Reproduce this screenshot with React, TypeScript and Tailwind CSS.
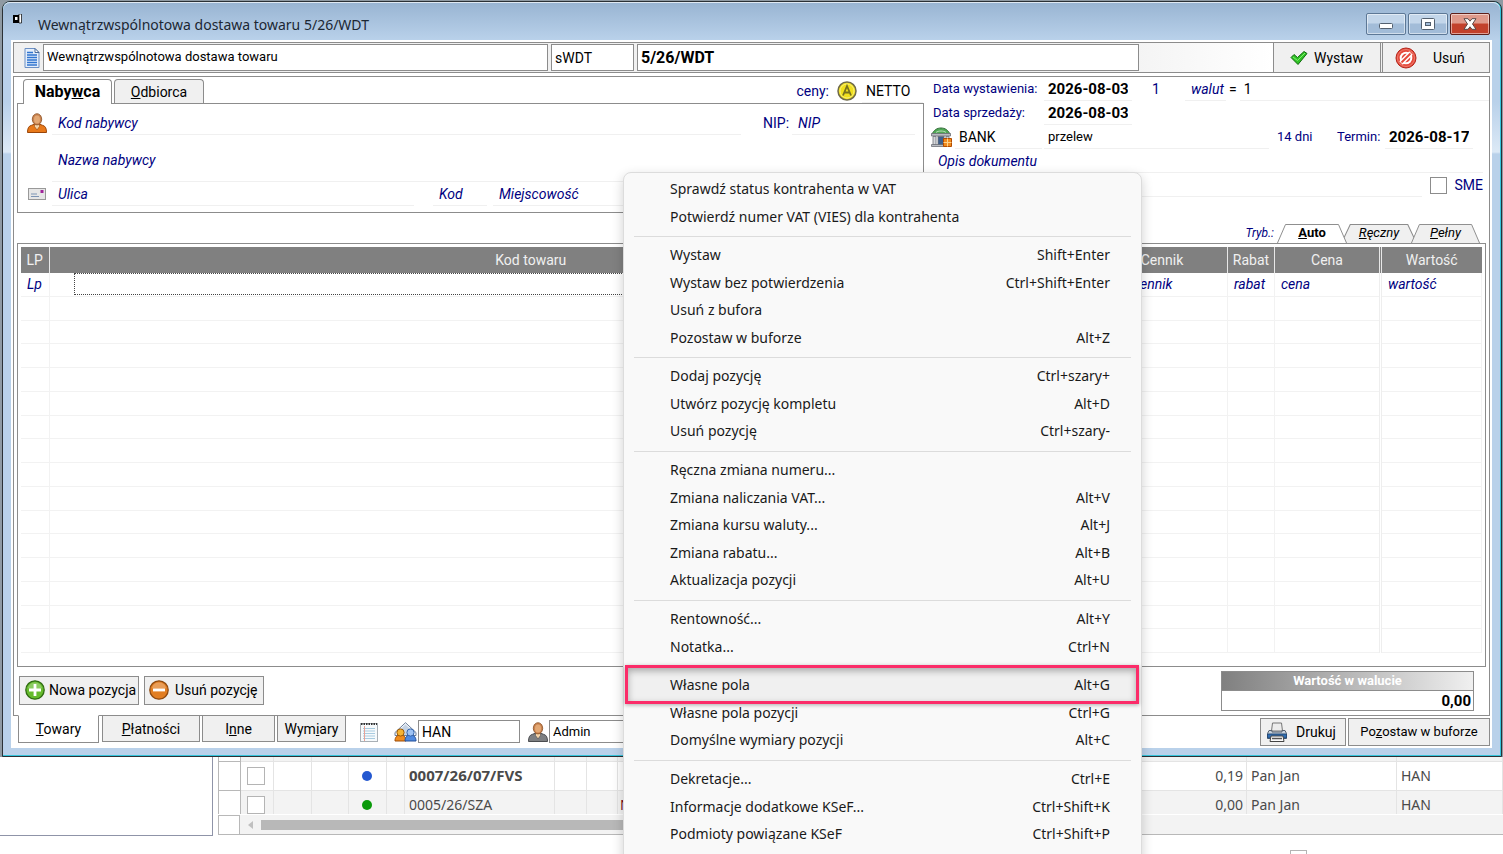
import React from "react"
import { clsx } from "clsx"

type MenuEntry = { label: string; keys?: string; marked?: boolean }

const menuGroups: MenuEntry[][] = [
  [
    { label: "Sprawdź status kontrahenta w VAT" },
    { label: "Potwierdź numer VAT (VIES) dla kontrahenta" },
  ],
  [
    { label: "Wystaw", keys: "Shift+Enter" },
    { label: "Wystaw bez potwierdzenia", keys: "Ctrl+Shift+Enter" },
    { label: "Usuń z bufora" },
    { label: "Pozostaw w buforze", keys: "Alt+Z" },
  ],
  [
    { label: "Dodaj pozycję", keys: "Ctrl+szary+" },
    { label: "Utwórz pozycję kompletu", keys: "Alt+D" },
    { label: "Usuń pozycję", keys: "Ctrl+szary-" },
  ],
  [
    { label: "Ręczna zmiana numeru..." },
    { label: "Zmiana naliczania VAT...", keys: "Alt+V" },
    { label: "Zmiana kursu waluty...", keys: "Alt+J" },
    { label: "Zmiana rabatu...", keys: "Alt+B" },
    { label: "Aktualizacja pozycji", keys: "Alt+U" },
  ],
  [
    { label: "Rentowność...", keys: "Alt+Y" },
    { label: "Notatka...", keys: "Ctrl+N" },
  ],
  [
    { label: "Własne pola", keys: "Alt+G", marked: true },
    { label: "Własne pola pozycji", keys: "Ctrl+G" },
    { label: "Domyślne wymiary pozycji", keys: "Alt+C" },
  ],
  [
    { label: "Dekretacje...", keys: "Ctrl+E" },
    { label: "Informacje dodatkowe KSeF...", keys: "Ctrl+Shift+K" },
    { label: "Podmioty powiązane KSeF", keys: "Ctrl+Shift+P" },
  ],
]

/* ---------- icons ---------- */

const DocumentIcon = () => (
  <svg width="16" height="20" viewBox="0 0 16 20">
    <path d="M1 .5h10l4 4v15H1z" fill="#e4eefb" stroke="#6b8fc4" />
    <path d="M11 .5v4h4z" fill="#fff" stroke="#4a6a9a" />
    <path d="M3 4.500h6M3 7h10M3 9.500h10M3 12h10M3 14.500h10M3 17h10" stroke="#2f74d0" strokeWidth="1.400" />
  </svg>
)

const CheckIcon = () => (
  <svg width="18" height="16" viewBox="0 0 18 16">
    <path d="M1 7.500 4 4.500l3.500 3L14 1.500l3 2L8 14.500z" fill="#2fc226" stroke="#12690f" strokeLinejoin="round" />
    <path d="M3 7l4.500 3.500L15 3" fill="none" stroke="#7ff06c" />
  </svg>
)

const ForbidIcon = () => (
  <svg width="22" height="22" viewBox="0 0 22 22">
    <circle cx="11" cy="11" r="10" fill="#e5483a" stroke="#b3261b" />
    <circle cx="11" cy="11" r="8.500" fill="none" stroke="#f08a7c" strokeWidth=".8" />
    <circle cx="11" cy="11" r="6.300" fill="#fff" />
    <circle cx="11" cy="11" r="4.300" fill="#e5483a" />
    <path d="M6 16 16 6" stroke="#fff" strokeWidth="5" />
    <path d="M6.500 15.500l9-9" stroke="#e5483a" strokeWidth="2" />
  </svg>
)

const PersonIcon = ({ body, edge }: { body: string; edge: string }) => (
  <svg width="20" height="20" viewBox="0 0 20 20">
    <path d="M.5 19.500c0-4 1-6.500 4-7.200L8 11h4l3.500 1.300c3 .7 4 3.200 4 7.200z" fill={body} stroke={edge} />
    <path d="M7.500 11h5v2.500L10 17l-2.500-3.500z" fill="#f3d3a8" stroke={edge} strokeWidth=".6" />
    <ellipse cx="10" cy="6.300" rx="4.700" ry="5.600" fill="#c98350" stroke="#8a4f22" strokeWidth=".8" />
    <ellipse cx="10" cy="6.500" rx="3" ry="4" fill="#e3a874" />
  </svg>
)

const LetterIcon = () => (
  <svg width="18" height="12" viewBox="0 0 18 12">
    <rect x=".5" y=".5" width="17" height="11" fill="#e6e6e6" stroke="#999" />
    <rect x="12.500" y="2" width="3" height="3" fill="#a0259a" />
    <path d="M3 6h6M3 8.500h8" stroke="#7d95b5" />
  </svg>
)

const CoinIcon = () => (
  <svg width="20" height="20" viewBox="0 0 20 20">
    <circle cx="10" cy="10" r="9" fill="#f1e01c" stroke="#6f6a4a" strokeWidth="1.500" />
    <circle cx="10" cy="10" r="7" fill="none" stroke="#f9f07c" />
    <path d="M6 14.500 10 5l4 9.500M7.500 11.500h5" fill="none" stroke="#77711f" strokeWidth="1.800" />
  </svg>
)

const BankIcon = () => (
  <svg width="21" height="20" viewBox="0 0 21 20">
    <path d="M1 7C3 3 6 1 10 1s7 2 9 6z" fill="#4fa855" stroke="#2d6a33" />
    <path d="M5 5.500C7 3.500 13 3.500 15 5.500" stroke="#b8e0b8" fill="none" />
    <path d="M.5 6.500h19v2.500H.5zM.5 17.500h19v2H.5z" fill="#b9bcc2" stroke="#6d7077" strokeWidth=".8" />
    <path d="M2 9.500h3v8H2zM15 9.500h3v8h-3z" fill="#d5d7db" stroke="#6d7077" strokeWidth=".8" />
    <rect x="7" y="9.500" width="6" height="8" fill="#3f5f8c" stroke="#6d7077" strokeWidth=".8" />
    <path d="M12.500 11.500h8v8h-8z" fill="#f08a1d" stroke="#b34c00" />
    <path d="M12.500 15.500h8M16.500 11.500v8" stroke="#ffd28a" />
  </svg>
)

const RoundIcon = ({ plus }: { plus?: boolean }) => (
  <svg width="20" height="20" viewBox="0 0 20 20">
    <circle cx="10" cy="10" r="9.200" fill={plus ? "#66bb2e" : "#e27e22"} stroke={plus ? "#2f6b12" : "#8f4a10"} strokeWidth="1.300" />
    <path d="M3 8a7.200 7.200 0 0 1 14 0C13 10 7 10 3 8z" fill="#fff" opacity=".25" />
    <path d={plus ? "M10 4v12M4 10h12" : "M4 10h12"} stroke="#fff" strokeWidth="2.800" />
  </svg>
)

const NotepadIcon = () => (
  <svg width="18" height="20" viewBox="0 0 18 20">
    <rect x=".5" y="1.500" width="17" height="18" fill="#f6fafc" stroke="#a9b0b6" />
    <path d="M1 2h16" stroke="#333" strokeWidth="2" strokeDasharray="1.500 1" />
    <path d="M3 6.500h12M3 9h12M3 11.500h12M3 14h12M3 16.500h12" stroke="#a8cbe0" />
    <path d="M4.500 4v15" stroke="#e8a296" />
  </svg>
)

const TeamIcon = () => (
  <svg width="23" height="20" viewBox="0 0 23 20">
    <path d="M1 10.500 11.500.7 22 10.500v3H1z" fill="#f4f7fb" stroke="#6c7f9a" />
    <path d="M5.500 8 11.500 2.500 17.500 8v5h-12z" fill="#c3d2e4" />
    <path d="M1 19c0-4 2-6 5.500-6S12 15 12 19z" fill="#f08c1e" stroke="#9c4d08" />
    <circle cx="6.500" cy="10.500" r="3.600" fill="#f6b433" stroke="#9c5a08" />
    <path d="M11 19c0-4 2-6 5.500-6s5.500 2 5.500 6z" fill="#4f8ae0" stroke="#224f97" />
    <circle cx="16.500" cy="10.500" r="3.600" fill="#9fc4f5" stroke="#3565ad" />
  </svg>
)

const PrinterIcon = () => (
  <svg width="20" height="20" viewBox="0 0 20 20">
    <path d="M5.500 1h9l1 8h-11z" fill="#ececec" stroke="#777" />
    <path d="M2 8.500h3V10h10V8.500h3l1.500 3v5h-19v-5z" fill="#c9d3de" stroke="#55606e" />
    <path d="M.5 12h19v4H.5z" fill="#2f6db2" stroke="#274a75" />
    <path d="M4 14h12l1 5.500H3z" fill="#fafafa" stroke="#444" />
    <path d="M5 16.500h10" stroke="#555" strokeWidth="1.500" />
  </svg>
)

/* ---------- small controls ---------- */

type FieldProps = React.InputHTMLAttributes<HTMLInputElement> & { name: string }

// flat field with only a pale line below it
const Field: React.FC<FieldProps> = ({ name, className, ...props }) => (
  <input
    aria-label={name}
    name={name}
    className={clsx(
      "h-6 min-w-0 border-b border-[#f0f0f0] bg-transparent outline-none placeholder:italic placeholder:text-[#000080] placeholder:opacity-100",
      className,
    )}
    {...props}
  />
)

const BoxField: React.FC<FieldProps> = ({ name, className, ...props }) => (
  <input
    aria-label={name}
    name={name}
    className={clsx("min-w-0 border border-[#8c8c8c] bg-white px-[3px] outline-none", className)}
    {...props}
  />
)

const PushButton: React.FC<React.ButtonHTMLAttributes<HTMLButtonElement>> = ({ className, ...props }) => (
  <button
    className={clsx("flex items-center whitespace-nowrap border border-[#8c8c8c] bg-[#f0f0f0]", className)}
    {...props}
  />
)

const ModeTab: React.FC<{ active?: boolean; className?: string; children: React.ReactNode }> = ({
  active,
  className,
  children,
}) => (
  <button className={clsx("relative -ml-[6px] h-[19px] text-[13px]", active ? "z-10 font-bold" : "italic", className)}>
    <svg className="absolute inset-0 h-full w-full" viewBox="0 0 74 19" preserveAspectRatio="none">
      <path d="M.5 19 9 .5h56L73.500 19" fill={active ? "#fff" : "#f0f0f0"} stroke="#8c8c8c" />
    </svg>
    <span className="relative">{children}</span>
  </button>
)

const BottomTab: React.FC<{ active?: boolean; className?: string; children: React.ReactNode }> = ({
  active,
  className,
  children,
}) => (
  <button
    className={clsx(
      "border border-[#8c8c8c]",
      active ? "-mt-px h-7 border-t-white bg-white" : "h-[26px] border-t-0 bg-[#f0f0f0]",
      className,
    )}
  >
    {children}
  </button>
)

/* ---------- window parts ---------- */

const captionButton = "flex h-[22px] w-10 items-center justify-center rounded-[2px] border shadow-[inset_0_0_0_1px_#ffffff80]"

const TitleBar = () => (
  <header className="flex h-[38px] justify-between pl-[2px] pr-[2px]">
    <div className="flex items-start">
      <svg className="mt-3" width="9" height="10" viewBox="0 0 9 10">
        <path d="M0 1h6v8H0z" fill="#000" />
        <path d="M2 3h2.500v3H2z" fill="#fff" />
        <path d="M6 0h2.500v9H6z" fill="#fff" stroke="#000" strokeWidth=".7" />
      </svg>
      <h1 className="ml-4 mt-[11px] font-['Noto_Sans'] text-sm leading-6 text-[#1c2733]">
        Wewnątrzwspólnotowa dostawa towaru 5/26/WDT
      </h1>
    </div>
    <div className="mt-[11px] flex gap-[2px]">
      <button aria-label="Minimalizuj" className={clsx(captionButton, "border-[#5d7896] bg-linear-to-b from-[#c3d6ea] from-45% to-[#a2bcd8] to-50%")}>
        <svg className="mt-1" width="14" height="6" viewBox="0 0 14 6">
          <rect x=".5" y=".5" width="13" height="5" rx="1" fill="#fff" stroke="#53606f" />
        </svg>
      </button>
      <button aria-label="Maksymalizuj" className={clsx(captionButton, "border-[#5d7896] bg-linear-to-b from-[#c3d6ea] from-45% to-[#a2bcd8] to-50%")}>
        <svg width="14" height="12" viewBox="0 0 14 12">
          <rect x=".5" y=".5" width="13" height="11" rx="1" fill="#fff" stroke="#53606f" />
          <rect x="4.500" y="4.500" width="5" height="3" fill="#a2bcd8" stroke="#53606f" />
        </svg>
      </button>
      <button aria-label="Zamknij" className={clsx(captionButton, "border-[#5e1f1a] bg-linear-to-b from-[#df9a8c] from-45% to-[#c2412c] to-50%")}>
        <svg width="14" height="12" viewBox="0 0 14 12">
          <path d="M1 .7h4L7 3.200 9 .7h4L9.500 6l3.500 5.300H9L7 8.800l-2 2.500H1L4.500 6z" fill="#fff" stroke="#5b4a4a" />
        </svg>
      </button>
    </div>
  </header>
)

const DocumentBar = () => (
  <div className="flex h-[31px] border border-[#8c8c8c] bg-[#f0f0f0]">
    <div className="flex w-[29px] items-center justify-end pr-[3px]">
      <DocumentIcon />
    </div>
    <div className="flex flex-1 gap-[3px] bg-linear-to-r from-[#f0f0f0] from-85% to-white py-px">
      <BoxField name="typ" defaultValue="Wewnątrzwspólnotowa dostawa towaru" className="w-[505px] text-[13px]" />
      <BoxField name="seria" defaultValue="sWDT" className="w-[83px]" />
      <BoxField name="numer" defaultValue="5/26/WDT" className="w-[502px] text-base font-bold" />
    </div>
    <PushButton className="-my-px w-[108px] gap-[6px] pl-4">
      <CheckIcon /> Wystaw
    </PushButton>
    <PushButton className="-my-px -mr-px ml-px w-[108px] gap-4 pl-3">
      <ForbidIcon /> Usuń
    </PushButton>
  </div>
)

const BuyerPanel = () => (
  <div className="pl-[3px]">
    <div className="flex h-[26px] items-end">
      <button className="relative z-10 -mb-px ml-[6px] h-[25px] w-[89px] rounded-t border border-b-0 border-[#8c8c8c] bg-white text-base font-bold">
        Naby<u>w</u>ca
      </button>
      <button className="ml-[2px] h-6 w-[90px] rounded-t border border-b-0 border-[#8c8c8c] bg-[#f0f0f0]">
        <u>O</u>dbiorca
      </button>
      <div className="flex flex-1 items-center justify-end pr-px">
        <span className="mr-2 text-[#000080]">ceny:</span>
        <CoinIcon />
        <Field name="ceny" defaultValue="NETTO" className="ml-[5px] w-[61px] px-1" />
      </div>
    </div>
    <div className="border border-[#8c8c8c] pb-[6px] pr-2">
      <div className="flex h-[31px] items-end">
        <div className="flex w-[34px] justify-center pb-[2px] pl-1">
          <PersonIcon body="#e8791a" edge="#9a4508" />
        </div>
        <Field name="kod-nabywcy" placeholder="Kod nabywcy" className="flex-1 px-[6px]" />
        <label htmlFor="nip" className="ml-[22px] w-[29px] leading-6 text-[#000080]">
          NIP:
        </label>
        <Field id="nip" name="nip" placeholder="NIP" className="w-[123px] px-[6px]" />
      </div>
      <div className="flex pl-[34px]">
        <Field name="nazwa-nabywcy" placeholder="Nazwa nabywcy" className="h-[47px] flex-1 px-[6px] pt-1" />
      </div>
      <div className="flex items-center">
        <div className="flex w-[34px] justify-center pl-1">
          <LetterIcon />
        </div>
        <Field name="ulica" placeholder="Ulica" className="w-[362px] px-[6px]" />
        <Field name="kod" placeholder="Kod" className="ml-[19px] w-[54px] px-[6px]" />
        <Field name="miejscowosc" placeholder="Miejscowość" className="ml-[6px] flex-1 px-[6px]" />
      </div>
    </div>
  </div>
)

const DatesPanel = () => (
  <div className="text-[#000080]">
    <div className="flex h-6 items-center pl-[9px]">
      <label htmlFor="data-wystawienia" className="w-[111px] text-[13px]">
        Data wystawienia:
      </label>
      <Field id="data-wystawienia" name="data-wystawienia" defaultValue="2026-08-03" className="w-[88px] px-1 text-[15px] font-bold text-black" />
      <span className="ml-5 w-[33px]">1</span>
      <Field name="waluta" placeholder="walut" className="w-[41px] pl-[6px]" />
      <span className="mx-[3px] text-black">=</span>
      <Field name="kurs" defaultValue="1" className="flex-1 px-1 text-black" />
    </div>
    <div className="flex h-6 items-center pl-[9px]">
      <label htmlFor="data-sprzedazy" className="w-[111px] text-[13px]">
        Data sprzedaży:
      </label>
      <Field id="data-sprzedazy" name="data-sprzedazy" defaultValue="2026-08-03" className="w-[88px] px-1 text-[15px] font-bold text-black" />
    </div>
    <div className="flex h-6 items-center pl-[7px]">
      <BankIcon />
      <Field name="bank" defaultValue="BANK" className="ml-[3px] w-[87px] px-1 text-black" />
      <Field name="platnosc" defaultValue="przelew" className="ml-[2px] flex-1 px-1 text-[13px] text-black" />
      <span className="ml-2 w-[60px] text-[13px]">14 dni</span>
      <label htmlFor="termin" className="w-12 text-[13px]">
        Termin:
      </label>
      <Field id="termin" name="termin" defaultValue="2026-08-17" className="mr-4 w-[88px] px-1 text-[15px] font-bold text-black" />
    </div>
    <div className="flex h-6 pl-2 pr-[6px]">
      <Field name="opis" placeholder="Opis dokumentu" className="flex-1 px-[6px]" />
    </div>
    <div className="flex h-6 items-center pl-2 pr-[6px]">
      <Field name="opis-2" className="flex-1" />
      <label className="ml-2 flex items-center gap-2">
        <input type="checkbox" className="size-[17px] appearance-none border border-[#8c8c8c] bg-white" />
        SME
      </label>
    </div>
    <div className="flex h-[46px] items-end justify-end pr-[9px]">
      <span className="mb-[2px] mr-[9px] text-xs italic">Tryb.:</span>
      <div className="flex text-black">
        <ModeTab active className="w-[70px]">
          <u>A</u>uto
        </ModeTab>
        <ModeTab className="w-[76px]">
          <u>R</u>ęczny
        </ModeTab>
        <ModeTab className="w-[69px]">
          <u>P</u>ełny
        </ModeTab>
      </div>
    </div>
  </div>
)

const itemColumns = [
  { head: "LP", hint: "Lp", width: "w-7", pad: "pl-[6px]" },
  { head: "Kod towaru", hint: "", width: "", pad: "pl-6" },
  { head: "", hint: "", width: "w-[84px]", pad: "pl-2" },
  { head: "Cennik", hint: "cennik", width: "w-[131px]", pad: "pl-9" },
  { head: "Rabat", hint: "rabat", width: "w-[47px]", pad: "pl-[6px]" },
  { head: "Cena", hint: "cena", width: "w-[106px]", pad: "pl-[6px]" },
  { head: "Wartość", hint: "wartość", width: "w-[101px]", pad: "pl-[6px]" },
]

const ItemsGrid = () => (
  <div className="ml-[3px] mr-[3px] h-[424px] overflow-hidden border border-[#8c8c8c] p-[3px]">
    <table className="w-full table-fixed border-collapse">
      <thead>
        <tr className="h-[26px] bg-[#808080] text-[#f0f0f0]">
          {itemColumns.map((c, i) => (
            <th
              key={i}
              className={clsx(
                "border-r border-[#e8e8e8] p-0 font-normal leading-none last:border-r-0",
                c.width,
                c.head === "Cena" && "border-r-[3px] border-double",
              )}
            >
              {c.head}
            </th>
          ))}
        </tr>
      </thead>
      <tbody>
        {Array.from({ length: 16 }, (_, row) => (
          <tr key={row} className="h-6 first:h-[23px] nth-[4n+3]:h-[23px]">
            {itemColumns.map((c, i) => (
              <td
                key={i}
                className={clsx(
                  "border-b border-r border-[#f2f2f2] p-0 italic leading-none text-[#000080]",
                  c.pad,
                  c.head === "Cena" && "border-r-[3px] border-r-[#eeeeee] [border-right-style:double]",
                )}
              >
                {row === 0 && c.head === "Kod towaru" ? (
                  <input
                    aria-label="Kod towaru"
                    className="block h-[22px] w-full border border-dotted border-[#444] outline-none"
                  />
                ) : (
                  row === 0 && c.hint
                )}
              </td>
            ))}
          </tr>
        ))}
      </tbody>
    </table>
  </div>
)

const SummaryRow = () => (
  <div className="flex h-12 items-center justify-between pl-[5px] pr-[15px]">
    <div className="flex gap-[5px] pb-[2px]">
      <PushButton className="h-[29px] w-[120px] gap-1 pl-[5px]">
        <RoundIcon plus /> Nowa pozycja
      </PushButton>
      <PushButton className="h-[29px] w-[120px] gap-[6px] pl-1">
        <RoundIcon /> Usuń pozycję
      </PushButton>
    </div>
    <div className="w-[253px] border border-[#8c8c8c] bg-white">
      <div className="h-[18px] bg-linear-to-r from-[#808080] to-[#f0f0f0] text-center text-[13px] font-bold leading-[18px] text-white">
        Wartość w walucie
      </div>
      <div className="h-5 border-t border-[#8c8c8c] pr-[2px] text-right text-[15px] font-bold leading-5">0,00</div>
    </div>
  </div>
)

const BottomBar = () => (
  <div className="flex h-8 justify-between pl-[5px]">
    <div className="flex items-start">
      <BottomTab active className="w-[81px]">
        <u>T</u>owary
      </BottomTab>
      <BottomTab className="ml-[3px] w-[98px]">
        <u>P</u>łatności
      </BottomTab>
      <BottomTab className="ml-[2px] w-[73px]">
        I<u>n</u>ne
      </BottomTab>
      <BottomTab className="ml-[2px] w-[69px]">
        Wym<u>i</u>ary
      </BottomTab>
      <div className="ml-[14px] mt-1 flex items-center">
        <NotepadIcon />
        <div className="ml-4 mr-px">
          <TeamIcon />
        </div>
        <BoxField name="magazyn" defaultValue="HAN" className="h-[23px] w-[102px]" />
        <div className="ml-2 mr-px">
          <PersonIcon body="#7d7f82" edge="#4a4c50" />
        </div>
        <BoxField name="operator" defaultValue="Admin" className="h-[23px] w-[102px] text-[13px]" />
      </div>
    </div>
    <div className="flex gap-[2px] pt-[2px]">
      <PushButton className="h-7 w-[86px] gap-[9px] pl-[6px]">
        <PrinterIcon /> Drukuj
      </PushButton>
      <PushButton className="h-7 w-[142px] justify-center text-[13px]">
        <span>
          Po<u>z</u>ostaw w buforze
        </span>
      </PushButton>
    </div>
  </div>
)

const DocumentWindow = () => (
  <main className="ml-[2px] mr-px rounded-t-lg border border-[#2b3136] bg-[#35c5dc] pb-px pr-px">
    <div className="rounded-t-[7px] bg-[linear-gradient(#98b4d2,#b9d1ea_38px,#b9d1ea_100px,#dce9f6_150px,#b9d1ea_152px)] px-2 pb-[7px] shadow-[inset_0_1px_0_#dfe9f3]">
      <TitleBar />
      <div className="bg-white p-[2px] pb-0">
        <DocumentBar />
        <section className="mt-[3px] border border-[#8c8c8c]">
          <div className="grid grid-cols-[1fr_565px]">
            <BuyerPanel />
            <DatesPanel />
          </div>
          <ItemsGrid />
          <SummaryRow />
        </section>
        <BottomBar />
      </div>
    </div>
  </main>
)

const documents = [
  { dot: "bg-[#2458d0]", no: "0007/26/07/FVS", flag: "", amount: "0,19", strong: true },
  { dot: "bg-[#0a9a0a]", no: "0005/26/SZA", flag: "N", amount: "0,00", strong: false },
]

const listWidths = ["w-[33px]", "w-[38px]", "w-[37px]", "w-[38px]", "w-[18px]", "w-[150px]", "w-8", "w-[31px]", "", "w-[150px]", "w-[106px]"]

const backCell = "border-b border-r border-[#e4e4e4] p-0"

const DocumentList = () => (
  <div className="flex flex-1 bg-white font-['Noto_Sans'] text-sm text-[#4a4a4a]">
    <div className="h-[79px] w-[213px] border-b border-r border-[#8f94a8]" />
    <div className="ml-[5px] h-[78px] flex-1 border-b border-[#b8b8b8] bg-[#f3f3f3]">
      <div className="h-[57px] overflow-hidden">
        <table className="w-full table-fixed border-collapse">
          <tbody>
            <tr className="h-1">
              <td className="w-[22px] border border-t-0 border-[#b8b8b8] bg-white p-0" />
              {listWidths.map((w, i) => (
                <td key={i} className={clsx(backCell, w)} />
              ))}
            </tr>
            {documents.map((d) => (
              <tr key={d.no} className={clsx("h-[29px]", d.strong ? "bg-white" : "bg-[#f3f3f3]")}>
                <td className="border border-[#b8b8b8] bg-white p-0" />
                <td className={backCell}>
                  <input
                    type="checkbox"
                    aria-label={d.no}
                    className="ml-[6px] block size-[18px] appearance-none border border-[#b4b4b4] bg-white"
                  />
                </td>
                <td className={backCell} />
                <td className={backCell} />
                <td className={backCell}>
                  <div className={clsx("ml-[13px] size-[10px] rounded-full", d.dot)} />
                </td>
                <td className={backCell} />
                <td className={clsx(backCell, "pl-1 leading-none", d.strong && "text-[15px] font-bold")}>{d.no}</td>
                <td className={backCell} />
                <td className={backCell} />
                <td className={clsx(backCell, "leading-none")}>
                  <div className="flex justify-between pl-[2px] pr-[3px]">
                    <span className="text-[#7a1020]">{d.flag}</span>
                    {d.amount}
                  </div>
                </td>
                <td className={clsx(backCell, "pl-1 leading-none")}>Pan Jan</td>
                <td className={clsx(backCell, "pl-1 leading-none")}>HAN</td>
              </tr>
            ))}
          </tbody>
        </table>
      </div>
      <div className="flex h-5 border-t border-white">
        <div className="w-[22px] border-x border-t border-[#b8b8b8] bg-white" />
        <div className="flex items-center pl-2">
          <svg width="5" height="8" viewBox="0 0 5 8">
            <path d="M5 0v8L0 4z" fill="#c0c0c0" />
          </svg>
          <div className="ml-2 h-[10px] w-[600px] bg-[#b8b8b8]" />
        </div>
      </div>
      <div className="mt-4 flex justify-end pr-[196px]">
        <input type="checkbox" aria-label="Filtr" className="size-[17px] appearance-none border border-[#b4b4b4] bg-white" />
      </div>
    </div>
  </div>
)

const MenuLine = () => <div className="mx-[10px] mb-1 mt-[6px] h-px bg-[#dcdcdc]" />

const ContextMenu = () => (
  <div
    role="menu"
    className="absolute left-[623px] top-[172px] w-[519px] rounded-lg border border-[#dcdcdc] bg-[#f9f9f9] pb-10 pt-[2px] font-['Noto_Sans'] text-sm text-[#1a1a1a] shadow-[0_4px_12px_#00000030]"
  >
    {menuGroups.map((group, i) => (
      <div key={i}>
        <div className="flex flex-col">
          {group.map((entry) => (
            <button
              key={entry.label}
              role="menuitem"
              className="relative flex h-[27px] items-center justify-between pl-[46px] pr-[31px] odd:h-7"
            >
              {entry.marked && (
                <span className="absolute -bottom-[5px] -top-[6px] left-px right-[2px] border-[3px] border-[#fb2c69] bg-[#f0f0f0] shadow-[0_1px_4px_#00000050,inset_0_3px_7px_#0000004d]" />
              )}
              <span className="relative">{entry.label}</span>
              <span className="relative">{entry.keys}</span>
            </button>
          ))}
        </div>
        <MenuLine />
      </div>
    ))}
  </div>
)

const App = () => {
  return (
    <div className="relative flex h-screen flex-col overflow-hidden bg-[#8f9aa3] pt-px font-['Roboto',sans-serif] text-sm text-black">
      <DocumentWindow />
      <DocumentList />
      <ContextMenu />
    </div>
  )
}

export default App
